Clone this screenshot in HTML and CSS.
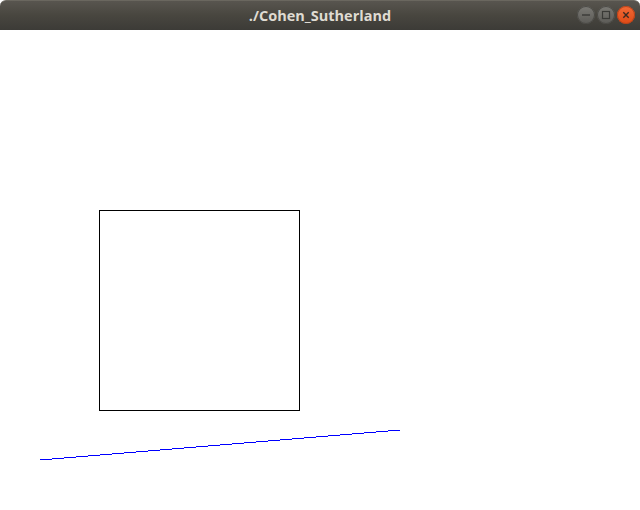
FILE: index.html
```html
<!DOCTYPE html>
<html>
<head>
<meta charset="utf-8">
<link rel="stylesheet" href="styles.css">
</head>
<body>
<div class="window">
  <header class="titlebar">
    <span class="title">./Cohen_Sutherland</span>
    <div class="controls">
      <span class="btn min"><svg viewBox="0 0 18 18" width="18" height="18"><line x1="5" y1="9" x2="13" y2="9" stroke="#3a3a37" stroke-width="1.4"/></svg></span>
      <span class="btn max"><svg viewBox="0 0 18 18" width="18" height="18"><rect x="5.5" y="5.5" width="7" height="7" fill="none" stroke="#3a3a37" stroke-width="1.2"/></svg></span>
      <span class="btn close"><svg viewBox="0 0 18 18" width="18" height="18"><path d="M6.3 6.3 L11.7 11.7 M11.7 6.3 L6.3 11.7" stroke="#3b2a22" stroke-width="1.4"/></svg></span>
    </div>
  </header>
  <main class="canvas">
    <svg class="drawing" width="640" height="480" viewBox="0 0 640 480">
      <rect x="99.5" y="180.5" width="200" height="200" fill="none" stroke="#000" stroke-width="1" shape-rendering="crispEdges"/>
      <line x1="40" y1="430" x2="400" y2="400" stroke="#0000ff" stroke-width="1" shape-rendering="crispEdges"/>
    </svg>
  </main>
</div>
</body>
</html>
```
FILE: styles.css
```css
html, body {
  margin: 0;
  padding: 0;
  background: #ffffff;
}
.window {
  width: 640px;
  height: 510px;
  display: flex;
  flex-direction: column;
}
.titlebar {
  height: 30px;
  flex: 0 0 30px;
  position: relative;
  display: flex;
  align-items: center;
  justify-content: center;
  background: linear-gradient(#58554f, #48463f 50%, #3c3b37);
  border-radius: 6px 6px 0 0;
  box-sizing: border-box;
  border-top: 1px solid #6a675f;
}
.title {
  font-family: "Open Sans", "DejaVu Sans", sans-serif;
  font-weight: 700;
  font-size: 14.5px;
  color: #dfdbd2;
}
.controls {
  position: absolute;
  right: 5px;
  top: 5px;
  display: flex;
  gap: 2px;
}
.btn {
  width: 18px;
  height: 18px;
  border-radius: 50%;
  display: block;
}
.btn svg { display: block; }
.min, .max {
  background: linear-gradient(#7b7a75, #5b5a56);
  box-shadow: inset 0 0 0 1px #4a4945;
}
.close {
  background: linear-gradient(#f26a36, #df4a16);
  box-shadow: inset 0 0 0 1px #b6421a;
}
.canvas {
  flex: 1;
  background: #ffffff;
}
.drawing { display: block; }
```
